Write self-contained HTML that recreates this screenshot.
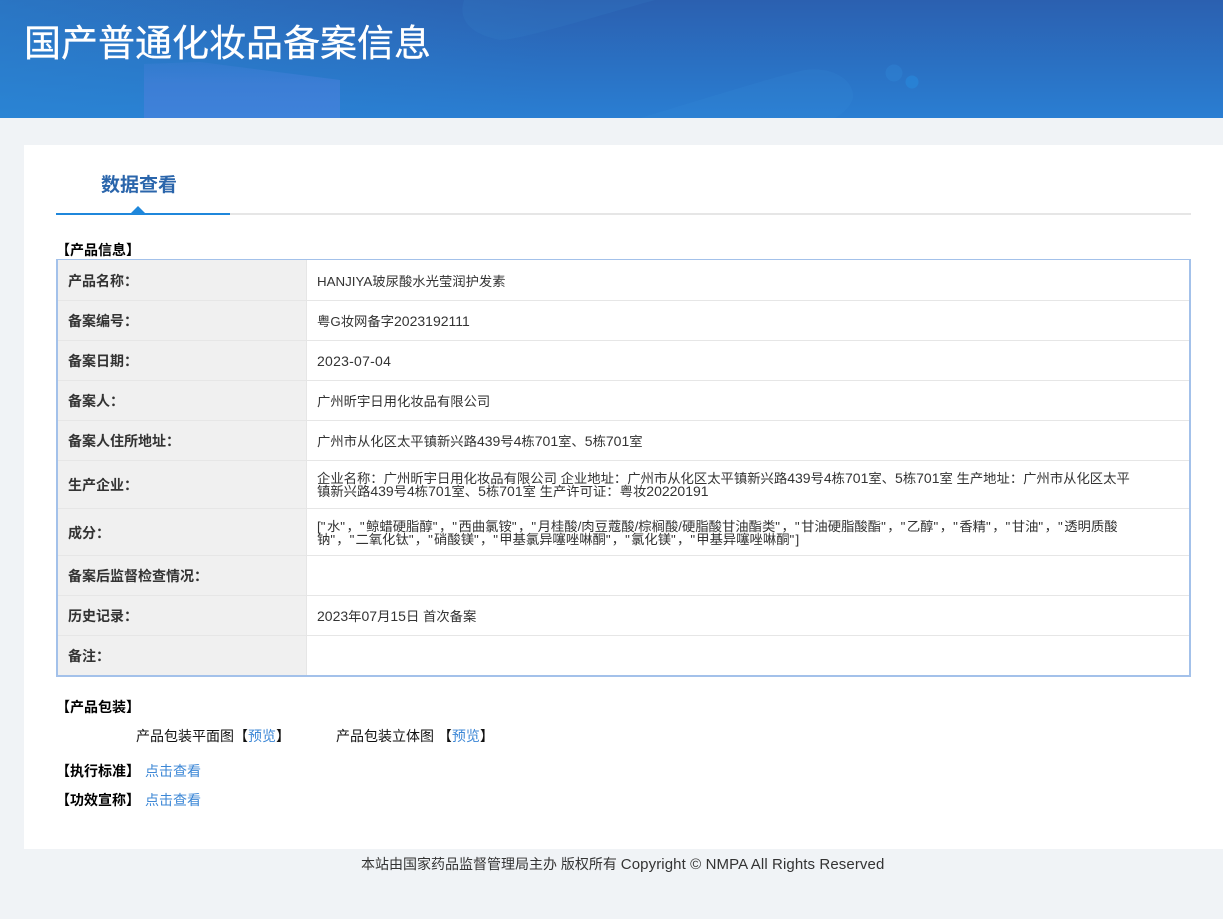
<!DOCTYPE html>
<html lang="zh-CN">
<head>
<meta charset="utf-8">
<title>国产普通化妆品备案信息</title>
<style>
*{margin:0;padding:0;box-sizing:border-box}
html,body{width:1223px;height:919px;overflow:hidden;background:#f0f3f6}
body{position:relative;font-family:"Liberation Sans","Noto Sans CJK SC",sans-serif;color:#333}
.a{position:absolute;white-space:nowrap}
.banner{position:absolute;left:0;top:0;width:1223px;height:118px}
.title{left:24px;top:18px;font-size:37px;line-height:52px;color:#fff;-webkit-text-stroke:.3px #fff}
.card{position:absolute;left:24px;top:145px;width:1199px;height:704px;background:#fff}
.tab{left:101px;top:173px;font-size:19px;line-height:26px;font-weight:bold;color:#2a65ab}
.line1{position:absolute;left:56px;top:213px;width:1135px;height:2px;background:#e6e6e6}
.line2{position:absolute;left:56px;top:213px;width:174px;height:2px;background:#1f87db}
.tri{position:absolute;left:131px;top:206px;width:0;height:0;border-left:7px solid transparent;border-right:7px solid transparent;border-bottom:7px solid #1f87db}
.h{font-size:14px;line-height:18px;font-weight:bold;color:#000}
table{position:absolute;left:56px;top:259px;width:1135px;height:418px;border-collapse:separate;border-spacing:0;border:2px solid #a3c1ea;border-width:1px 2px 2px 2px;table-layout:fixed}
td{font-size:13.33px;border-bottom:1px solid #e6e6e6;vertical-align:middle;line-height:13px;padding-top:2px}
td.l{width:249px;background:#f0f0f0;font-weight:bold;font-size:14px;border-right:1px solid #e6e6e6;padding-left:10px;color:#333}
td.v{padding-left:10px;color:#333}
td.n{padding-top:0}
tr:last-child td{border-bottom:0}
i{font-style:normal;font-size:14px}
i.q{font-size:13.33px;letter-spacing:1.5px}
i.r{font-size:13.33px;letter-spacing:1.2px}
.t{font-size:14px;line-height:18px;color:#111}
.lk{color:#3c87d6}
.foot{left:361px;top:855px;font-size:14px;line-height:18px;color:#333}
</style>
</head>
<body>
<svg class="banner" viewBox="0 0 1223 118" xmlns="http://www.w3.org/2000/svg" preserveAspectRatio="none">
<defs>
<linearGradient id="g" gradientUnits="userSpaceOnUse" x1="0" y1="0" x2="0" y2="118">
<stop offset="0" stop-color="#2b60b0"/>
<stop offset="1" stop-color="#2a7ed2"/>
</linearGradient>
<linearGradient id="g4" x1="0" y1="0" x2="1" y2="0">
<stop offset="0" stop-color="#2a8ad6"/>
<stop offset=".45" stop-color="#2a8ad6" stop-opacity="0"/>
</linearGradient>
<linearGradient id="p" x1="0" y1="0" x2="0" y2="1">
<stop offset="0" stop-color="#3f7ed6" stop-opacity=".35"/>
<stop offset=".4" stop-color="#3f7ed6" stop-opacity=".85"/>
<stop offset="1" stop-color="#3f82da"/>
</linearGradient>
</defs>
<rect width="1223" height="118" fill="url(#g)"/>
<rect width="1223" height="118" fill="url(#g4)" opacity=".5"/>
<path d="M144 64 L200 62 L340 80 V118 H144Z" fill="url(#p)"/>
<path d="M464 0 C458 18 468 34 500 40 C520 40 590 18 655 0Z" fill="#3f8ad0" opacity=".15"/>
<path d="M640 118 C700 100 780 75 805 70 C835 66 855 82 853 98 C850 108 842 114 835 118Z" fill="#3f92dc" opacity=".15"/>
<circle cx="894" cy="73" r="8.5" fill="#2f86d8" opacity=".4"/>
<circle cx="912" cy="82" r="6.5" fill="#2889dc" opacity=".6"/>
</svg>
<div class="a title">国产普通化妆品备案信息</div>
<div class="card"></div>
<div class="a tab">数据查看</div>
<div class="line1"></div>
<div class="line2"></div>
<div class="tri"></div>
<div class="a h" style="left:56px;top:241px">【产品信息】</div>
<table>
<colgroup><col style="width:249px"><col></colgroup>
<tr style="height:41px"><td class="l">产品名称：</td><td class="v" style="font-size:13.33px">HANJIYA玻尿酸水光莹润护发素</td></tr>
<tr style="height:40px"><td class="l">备案编号：</td><td class="v">粤G妆网备字<i>2023192111</i></td></tr>
<tr style="height:40px"><td class="l">备案日期：</td><td class="v"><i style="letter-spacing:.25px">2023-07-04</i></td></tr>
<tr style="height:40px"><td class="l">备案人：</td><td class="v">广州昕宇日用化妆品有限公司</td></tr>
<tr style="height:40px"><td class="l">备案人住所地址：</td><td class="v">广州市从化区太平镇新兴路<i>439</i>号<i>4</i>栋<i>701</i>室、<i>5</i>栋<i>701</i>室</td></tr>
<tr style="height:48px"><td class="l">生产企业：</td><td class="v n">企业名称：广州昕宇日用化妆品有限公司 企业地址：广州市从化区太平镇新兴路<i>439</i>号<i>4</i>栋<i>701</i>室、<i>5</i>栋<i>701</i>室 生产地址：广州市从化区太平<br>镇新兴路<i>439</i>号<i>4</i>栋<i>701</i>室、<i>5</i>栋<i>701</i>室 生产许可证：粤妆<i>20220191</i></td></tr>
<tr style="height:47px"><td class="l">成分：</td><td class="v">[<i class="q">"</i>水<i class="q">"</i>，<i class="q">"</i>鲸蜡硬脂醇<i class="q">"</i>，<i class="q">"</i>西曲氯铵<i class="q">"</i>，<i class="q">"</i>月桂酸/肉豆蔻酸/棕榈酸/硬脂酸甘油酯类<i class="q">"</i>，<i class="q">"</i>甘油硬脂酸酯<i class="q">"</i>，<i class="q">"</i>乙醇<i class="q">"</i>，<i class="q">"</i>香精<i class="q">"</i>，<i class="q">"</i>甘油<i class="q">"</i>，<i class="q">"</i>透明质酸<br>钠<i class="r">"</i>，<i class="r">"</i>二氧化钛<i class="r">"</i>，<i class="r">"</i>硝酸镁<i class="r">"</i>，<i class="r">"</i>甲基氯异噻唑啉酮<i class="r">"</i>，<i class="r">"</i>氯化镁<i class="r">"</i>，<i class="r">"</i>甲基异噻唑啉酮<i class="r">"</i>]</td></tr>
<tr style="height:40px"><td class="l">备案后监督检查情况：</td><td class="v"></td></tr>
<tr style="height:40px"><td class="l">历史记录：</td><td class="v"><i>2023</i>年<i>07</i>月<i>15</i>日 首次备案</td></tr>
<tr style="height:39px"><td class="l">备注：</td><td class="v"></td></tr>
</table>
<div class="a h" style="left:56px;top:698px">【产品包装】</div>
<div class="a t" style="left:136px;top:727px">产品包装平面图【<span class="lk">预览</span>】</div>
<div class="a t" style="left:336px;top:727px">产品包装立体图&nbsp;【<span class="lk">预览</span>】</div>
<div class="a h" style="left:56px;top:762px">【执行标准】</div>
<div class="a t lk" style="left:145px;top:762px">点击查看</div>
<div class="a h" style="left:56px;top:791px">【功效宣称】</div>
<div class="a t lk" style="left:145px;top:791px">点击查看</div>
<div class="a foot">本站由国家药品监督管理局主办 版权所有 <span style="font-size:15px;letter-spacing:.1px">Copyright © NMPA All Rights Reserved</span></div>
</body>
</html>
